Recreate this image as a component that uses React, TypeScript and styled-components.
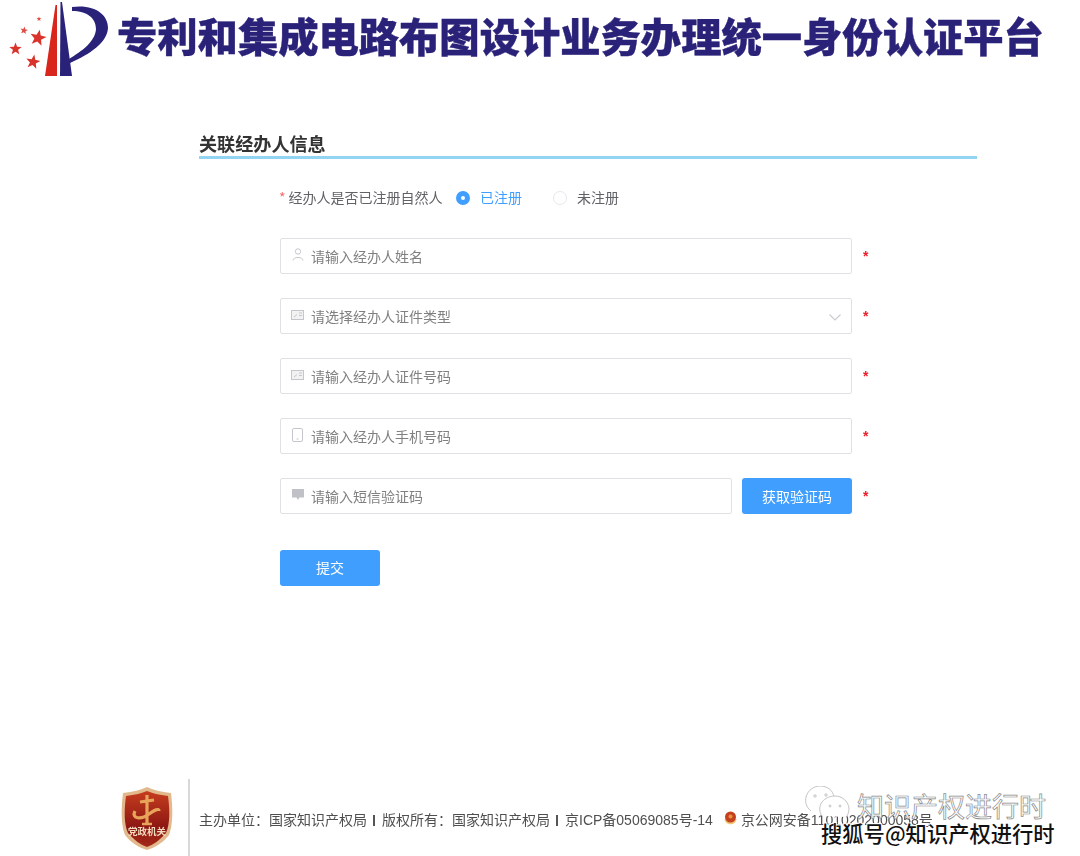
import React from "react";
import styled, { createGlobalStyle } from "styled-components";

const GlobalStyle = createGlobalStyle`
  html, body {
    margin: 0;
    padding: 0;
    background: #fff;
    font-family: "Noto Sans CJK SC", "Liberation Sans", sans-serif;
  }
`;

const Page = styled.div`
  position: relative;
  width: 1080px;
  height: 856px;
  overflow: hidden;
  display: flex;
  flex-direction: column;
`;

// Header
const Header = styled.header`
  height: 80px;
  padding-left: 8px;
  box-sizing: border-box;
  display: flex;
  align-items: flex-start;
  gap: 9px;
  filter: blur(0.4px);
`;

const SiteTitle = styled.h1`
  margin: 0;
  height: 70px;
  line-height: 70px;
  font-size: 40.3px;
  font-weight: 900;
  color: #2a2278;
  white-space: nowrap;
  -webkit-text-stroke: 0.4px #2a2278;
`;

// Form section
const Section = styled.main`
  flex: 1;
  margin: 50px 0 0 199px;
  width: 778px;
  filter: blur(0.35px);
`;

const SectionTitle = styled.h2`
  margin: 0;
  height: 26px;
  line-height: 26px;
  font-size: 18.100px;
  font-weight: 700;
  color: #333;
  border-bottom: 3px solid #92d4f2;
`;

const FormBody = styled.form`
  margin: 25px 0 0 81px;
  display: flex;
  flex-direction: column;
  align-items: flex-start;
`;

const RadioRow = styled.div`
  height: 28px;
  margin-bottom: 26px;
  display: flex;
  align-items: center;
  font-size: 14px;
  color: #606266;
`;

const RadioLabel = styled.span`
  width: 176px;
  margin-left: -1px;
  padding-bottom: 2px;
  white-space: nowrap;
  &::before {
    content: "*";
    color: #f56c6c;
    margin-right: 3px;
  }
`;

const RadioDot = styled.span<{ $checked?: boolean }>`
  width: 14px;
  height: 14px;
  margin-left: ${p => (p.$checked ? "1px" : "0")};
  box-sizing: border-box;
  border-radius: 50%;
  border: ${p => (p.$checked ? "5px solid #409eff" : "1px solid #e4e7ed")};
  background: #fff;
`;

const RadioText = styled.span<{ $checked?: boolean }>`
  margin-left: 10px;
  padding-bottom: 2px;
  width: ${p => (p.$checked ? "73px" : "auto")};
  color: ${p => (p.$checked ? "#409eff" : "#606266")};
`;

const FieldRow = styled.div`
  display: flex;
  align-items: center;
  height: 36px;
  margin-bottom: 24px;
`;

const InputBox = styled.div<{ $width?: number }>`
  width: ${p => p.$width ?? 572}px;
  height: 36px;
  box-sizing: border-box;
  border: 1px solid #e0e1e4;
  border-radius: 2px;
  display: flex;
  align-items: center;
  padding: 0 10px 0 10px;
  font-size: 14px;
  color: #808080;
`;

const IconSlot = styled.span`
  width: 13px;
  height: 16px;
  margin-right: 7px;
  padding-bottom: 3px;
  display: flex;
  align-items: center;
  justify-content: center;
  flex: none;
`;

const Placeholder = styled.span`
  flex: 1;
  white-space: nowrap;
`;

const ChevronSlot = styled.span`
  display: flex;
  padding-top: 2px;
`;

const Star = styled.span`
  margin-left: 11px;
  width: 8px;
  color: #f01f2c;
  font-size: 14px;
  line-height: 14px;
  font-family: "Liberation Sans", sans-serif;
  font-weight: 700;
`;

const CodeButton = styled.button`
  width: 110px;
  height: 36px;
  margin-left: 10px;
  padding: 0;
  border: 0;
  border-radius: 3px;
  background: #409eff;
  color: #fff;
  font: inherit;
  font-size: 14px;
`;

const SubmitButton = styled.button`
  width: 100px;
  height: 36px;
  margin-top: 12px;
  padding: 0 0 2px;
  border: 0;
  border-radius: 3px;
  background: #409eff;
  color: #fff;
  font: inherit;
  font-size: 14px;
`;

// Footer
const Footer = styled.footer`
  height: 77px;
  padding-left: 121px;
  display: flex;
  align-items: stretch;
  filter: blur(0.35px);
`;

const BadgeSlot = styled.div`
  width: 52px;
  padding-top: 8px;
`;

const Divider = styled.div`
  width: 2px;
  margin-left: 15px;
  background: #d8d8d8;
`;

const FooterText = styled.div`
  margin-left: 9px;
  padding-top: 31px;
  font-family: "Liberation Sans", "Noto Sans CJK SC", sans-serif;
  font-size: 14px;
  line-height: 20px;
  color: #4f4f4f;
  white-space: nowrap;
  display: flex;
  align-items: flex-start;
`;

const FooterSep = styled.span`
  width: 2px;
  height: 11px;
  margin: 5px 7px 0 6px;
  background: #555;
`;

const PoliceIcon = styled.span`
  margin: 1px 4px 0 11px;
  display: inline-flex;
`;

// Watermarks lying over the footer
const WeChatMark = styled.div`
  position: absolute;
  left: 805px;
  top: 786px;
`;

const HollowMark = styled.div`
  position: absolute;
  left: 857px;
  top: 788px;
  font-size: 27px;
  line-height: 36px;
  color: #fff;
  -webkit-text-stroke: 0.7px #8a8a8a;
  white-space: nowrap;
`;

const SohuMark = styled.div`
  position: absolute;
  left: 821px;
  top: 819px;
  font-size: 21.300px;
  line-height: 27px;
  font-weight: 500;
  color: #111;
  text-shadow: 1px 1px 0 #fff, -1px -1px 0 #fff, 1px -1px 0 #fff, -1px 1px 0 #fff;
  white-space: nowrap;
`;

const iconStroke = "#c4c6cb";

// five pointed star, rotated a little as on the emblem
const starPoints = (cx: number, cy: number, r: number, rot: number) =>
  Array.from({ length: 10 }, (_, i) => {
    const rad = i % 2 ? r * 0.42 : r;
    const a = ((rot + i * 36 - 90) * Math.PI) / 180;
    return `${(cx + rad * Math.cos(a)).toFixed(1)},${(cy + rad * Math.sin(a)).toFixed(1)}`;
  }).join(" ");

const PatentLogo = () => (
  <svg width="100" height="78" viewBox="8 0 100 78">
    <polygon points="45,76 57,76 57,5 55.500,5" fill="#d9261c" />
    <polygon points="60,76 72,76 62,2 60.500,2" fill="#2a2278" />
    <path d="M72 7 C94 4 108 14 108 28 C107 43 90 54 70 63 L69 59 C82 51 95 42 96 29 C96 18 87 11 72 11 Z" fill="#2a2278" />
    <polygon points={starPoints(38, 38, 8.500, 12)} fill="#d9342c" />
    <polygon points={starPoints(15.500, 49, 6.500, 0)} fill="#d9342c" />
    <polygon points={starPoints(33, 62, 7.500, 10)} fill="#d9342c" />
    <polygon points={starPoints(24, 30.500, 4, 10)} fill="#dd5048" />
    <polygon points={starPoints(39, 19, 2.600, 0)} fill="#dd5048" />
  </svg>
);

const UserIcon = () => (
  <svg width="12" height="13" viewBox="0 0 12 13" fill="none" stroke={iconStroke}>
    <circle cx="6" cy="3.500" r="2.700" />
    <path d="M1 12.500 C1 8.500 11 8.500 11 12.500" />
  </svg>
);

const CardIcon = () => (
  <svg width="13" height="10" viewBox="0 0 13 10" fill="none" stroke={iconStroke}>
    <rect x="0.500" y="0.500" width="12" height="9" fill="#f2f2f3" />
    <path d="M3 7 L6 4.500 M8 3 H11 M8 5.500 H11" />
  </svg>
);

const PhoneIcon = () => (
  <svg width="11" height="14" viewBox="0 0 11 14" fill="none" stroke={iconStroke}>
    <rect x="0.500" y="0.500" width="10" height="13" rx="1.500" />
    <path d="M4.500 11 H6.500" />
  </svg>
);

const MessageIcon = () => (
  <svg width="12" height="12" viewBox="0 0 12 12">
    <path d="M0 0 H12 V8.500 H7.500 L6 11 L4.500 8.500 H0 Z" fill="#bfc1c6" />
  </svg>
);

const ChevronIcon = () => (
  <svg width="12" height="7" viewBox="0 0 12 7" fill="none" stroke="#c8cacf" strokeWidth="1.100">
    <path d="M0.500 0.500 L6 6 L11.500 0.500" />
  </svg>
);

const PartyBadge = () => (
  <svg width="52" height="64" viewBox="0 0 52 64">
    <defs>
      <linearGradient id="shield" x1="0" y1="0" x2="0" y2="1">
        <stop offset="0" stopColor="#c63d1f" />
        <stop offset="0.650" stopColor="#8c1712" />
        <stop offset="1" stopColor="#a52a18" />
      </linearGradient>
    </defs>
    <path d="M2 6 C12 5 20 3 26 0 C32 3 40 5 50 6 C52 22 52 38 48 48 C42 56 33 61 26 63 C19 61 10 56 4 48 C0 38 0 22 2 6 Z" fill="#e2b98c" />
    <path d="M5 9 C14 8 21 6 26 4 C31 6 38 8 47 9 C49 24 49 37 45 46 C39 53 32 58 26 60 C20 58 13 53 7 46 C3 37 3 24 5 9 Z" fill="url(#shield)" />
    <path d="M26 8 V37 M19 15 L33 13 M14 24 C10 32 20 33 28 27 C33 23 38 21 38 24" fill="none" stroke="#e8a45a" strokeWidth="3.200" />
    <path d="M21 37 H31" stroke="#e8a45a" strokeWidth="2.500" />
    <text x="26" y="48" textAnchor="middle" fontSize="9.500" fontWeight="700" fill="#f3d9bd" fontFamily="'Noto Sans CJK SC', sans-serif">党政机关</text>
  </svg>
);

const PoliceBadge = () => (
  <svg width="13" height="14" viewBox="0 0 13 14">
    <path d="M0.500 8 C1 15 12 15 12.500 8 Z" fill="#f0c878" />
    <circle cx="6.500" cy="6" r="5.500" fill="#c4401e" />
    <circle cx="6.500" cy="5.500" r="2" fill="#e8963e" />
  </svg>
);

const WeChatIcon = () => (
  <svg width="46" height="40" viewBox="0 0 46 40" fill="none" stroke="#b5b5b5" strokeWidth="0.800">
    <path d="M6 25 C1 21 0 16 1 11 C3 4 9 0 15 0 C22 0 28 4 29 11" fill="#fff" />
    <path d="M17 30 C14 26 14 20 17 16 C20 12 25 10 30 10 C37 10 43 15 44 22 C44 26 43 29 41 31" fill="#fff" />
    <circle cx="10" cy="10" r="1.200" />
    <circle cx="21" cy="9" r="1.200" />
    <circle cx="25" cy="20" r="1" />
    <circle cx="35" cy="20" r="1" />
  </svg>
);

const fields = [
  { icon: <UserIcon />, text: "请输入经办人姓名" },
  { icon: <CardIcon />, text: "请选择经办人证件类型", select: true },
  { icon: <CardIcon />, text: "请输入经办人证件号码" },
  { icon: <PhoneIcon />, text: "请输入经办人手机号码" },
];

export default function App() {
  return (
    <Page>
      <GlobalStyle />
      <Header>
        <PatentLogo />
        <SiteTitle>专利和集成电路布图设计业务办理统一身份认证平台</SiteTitle>
      </Header>

      <Section>
        <SectionTitle>关联经办人信息</SectionTitle>
        <FormBody>
          <RadioRow>
            <RadioLabel>经办人是否已注册自然人</RadioLabel>
            <RadioDot $checked />
            <RadioText $checked>已注册</RadioText>
            <RadioDot />
            <RadioText>未注册</RadioText>
          </RadioRow>

          {fields.map(f => (
            <FieldRow key={f.text}>
              <InputBox>
                <IconSlot>{f.icon}</IconSlot>
                <Placeholder>{f.text}</Placeholder>
                {f.select && <ChevronSlot><ChevronIcon /></ChevronSlot>}
              </InputBox>
              <Star>*</Star>
            </FieldRow>
          ))}

          <FieldRow>
            <InputBox $width={452}>
              <IconSlot><MessageIcon /></IconSlot>
              <Placeholder>请输入短信验证码</Placeholder>
            </InputBox>
            <CodeButton type="button">获取验证码</CodeButton>
            <Star>*</Star>
          </FieldRow>

          <SubmitButton type="button">提交</SubmitButton>
        </FormBody>
      </Section>

      <Footer>
        <BadgeSlot><PartyBadge /></BadgeSlot>
        <Divider />
        <FooterText>
          <span>主办单位：国家知识产权局</span>
          <FooterSep />
          <span>版权所有：国家知识产权局</span>
          <FooterSep />
          <span>京ICP备05069085号-14</span>
          <PoliceIcon><PoliceBadge /></PoliceIcon>
          <span>京公网安备11010202000058号</span>
        </FooterText>
      </Footer>

      <WeChatMark><WeChatIcon /></WeChatMark>
      <HollowMark>知识产权进行时</HollowMark>
      <SohuMark>搜狐号@知识产权进行时</SohuMark>
    </Page>
  );
}
